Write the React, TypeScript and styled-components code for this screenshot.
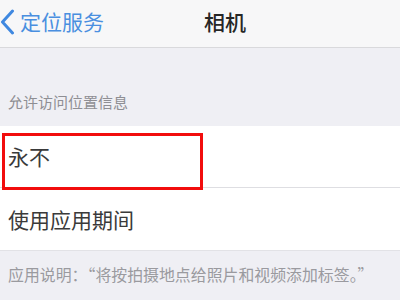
import React from "react";
import styled, { createGlobalStyle } from "styled-components";

const Global = createGlobalStyle`
  html, body { margin: 0; padding: 0; background: #efeff4; }
  body { font-family: "Noto Sans CJK SC", "Noto Sans", sans-serif; width: 400px; height: 300px; overflow: hidden; }
`;

const Page = styled.div`
  width: 400px;
  height: 300px;
  display: flex;
  flex-direction: column;
  background: #efeff4;
`;

const NavBar = styled.div`
  height: 48px;
  flex: none;
  box-sizing: border-box;
  padding-bottom: 4px;
  display: flex;
  align-items: center;
  background: #f7f7f8;
  border-bottom: 1px solid #d9d9dc;
`;

const Back = styled.div`
  display: flex;
  align-items: center;
  gap: 5px;
  color: #4a8fe0;
  font-size: 21px;
  line-height: 1;
  width: 204px;
  box-sizing: border-box;
`;

const Title = styled.div`
  color: #262626;
  font-size: 21px;
  line-height: 1;
  font-weight: 500;
`;

const SectionHeader = styled.div`
  height: 78px;
  flex: none;
  box-sizing: border-box;
  display: flex;
  align-items: flex-end;
  padding: 0 8px 17px;
  color: #8e8e93;
  font-size: 15px;
  line-height: 1;
`;

const Group = styled.div`
  background: #fff;
  flex: none;
`;

const Row = styled.div<{ $divider?: boolean }>`
  height: 62px;
  box-sizing: border-box;
  display: flex;
  align-items: center;
  padding-left: 8px;
  font-size: 21px;
  line-height: 1;
  color: #3a3a3a;
  border-bottom: ${(p) => (p.$divider ? "1px solid #dedee2" : "none")};
  position: relative;
`;

const Highlight = styled.div`
  position: absolute;
  left: 2px;
  top: 7px;
  width: 201px;
  height: 57px;
  box-sizing: border-box;
  border: 3px solid #f20d0d;
  z-index: 2;
`;

const Footer = styled.div`
  padding: 16px 8px 0;
  color: #9a9a9f;
  font-size: 15.9px;
  line-height: 1;
  white-space: nowrap;
  border-top: 1px solid #e2e2e6;
`;

export default function App() {
  return (
    <>
      <Global />
      <Page>
        <NavBar>
          <Back>
            <svg width="15" height="26" viewBox="0 0 15 26" fill="none">
              <path d="M12.5 2 L2.5 13 L12.5 24" stroke="#3f88e0" strokeWidth="3" strokeLinecap="round" strokeLinejoin="round" />
            </svg>
            <span>定位服务</span>
          </Back>
          <Title>相机</Title>
        </NavBar>
        <SectionHeader>允许访问位置信息</SectionHeader>
        <Group>
          <Row $divider>
            永不
            <Highlight />
          </Row>
          <Row>使用应用期间</Row>
        </Group>
        <Footer>应用说明：“将按拍摄地点给照片和视频添加标签。”</Footer>
      </Page>
    </>
  );
}
